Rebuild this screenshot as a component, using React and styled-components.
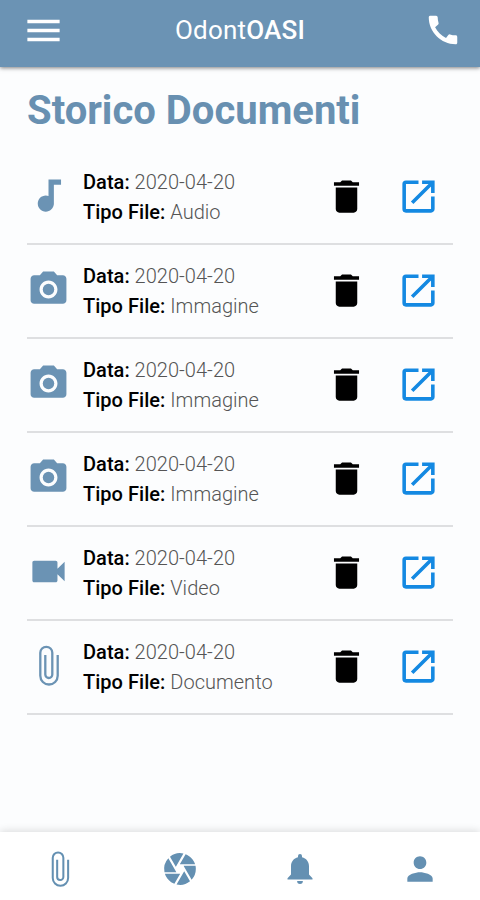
import React from "react";
import styled, { createGlobalStyle } from "styled-components";
import {
  MdAudiotrack,
  MdCall,
  MdCamera,
  MdCameraAlt,
  MdDelete,
  MdLaunch,
  MdMenu,
  MdPerson,
  MdVideocam,
} from "react-icons/md";

const GlobalStyle = createGlobalStyle`
  * {
    box-sizing: border-box;
  }

  body {
    margin: 0;
    font-family: Roboto, sans-serif;
    background-color: #fcfdfe;
  }

  svg {
    display: block;
  }
`;

const Page = styled.div`
  height: 900px;
  display: flex;
  flex-direction: column;
`;

const Header = styled.header`
  height: 67px;
  padding: 0 18px 7px 22px;
  display: grid;
  grid-template-columns: 43px 1fr 47px;
  align-items: center;
  background-color: #6b93b4;
  color: white;
  box-shadow: 0 1px 4px rgba(0, 0, 0, 0.5);
`;

const Brand = styled.div`
  font-size: 26px;
  line-height: 30px;
  letter-spacing: 0.2px;
  text-align: center;

  b {
    font-weight: 500;
  }
`;

const IconButton = styled.button`
  display: flex;
  justify-self: ${(props) => props.$align || "start"};
  padding: 0;
  border: none;
  background: none;
  color: ${(props) => props.$color || "inherit"};
  font-size: ${(props) => props.$size}px;
  cursor: pointer;
`;

const Content = styled.main`
  flex: 1;
  padding: 21px 27px 0;
`;

const Title = styled.h1`
  margin: 0 0 17px;
  font-size: 40px;
  line-height: 46px;
  font-weight: 700;
  color: #6890b1;
`;

const Row = styled.div`
  height: 94px;
  display: flex;
  align-items: center;
  border-bottom: 2px solid #dedfe1;
`;

const FileIcon = styled.div`
  width: 56px;
  padding-bottom: 3px;
  color: #6b93b4;
  font-size: 43px;
`;

const Info = styled.div`
  flex: 1;
  font-size: 20px;
  line-height: 30px;
  font-weight: 300;
  letter-spacing: 0.03px;
  color: #555;

  b {
    font-weight: 500;
    color: #000;
  }
`;

const Actions = styled.div`
  display: flex;
  gap: 29px;
  margin-right: 13px;
  padding-bottom: 1px;
`;

const TabBar = styled.nav`
  height: 68px;
  display: flex;
  align-items: center;
  padding-top: 6px;
  background-color: white;
  box-shadow: 0 -1px 8px rgba(0, 0, 0, 0.14);
`;

const Tab = styled.div`
  flex: 1;
  display: flex;
  justify-content: center;
  color: #6490b2;
  font-size: 38px;
`;

function PaperclipIcon() {
  return (
    <svg width="1em" height="1em" viewBox="-12 -1.5 43 43" fill="none" stroke="currentColor" strokeWidth="2.3">
      <path d="M18.7 9.5V30.3A8.7 8.7 0 0 1 1.3 30.3V7.3A6 6 0 0 1 13.3 7.3V29A3.5 3.5 0 0 1 6.3 29V9.5" />
    </svg>
  );
}

function BellIcon() {
  return (
    <svg width="1em" height="1em" viewBox="-6.5 -4 38 38" fill="currentColor">
      <path d="M12.5 0a2 2 0 0 1 2 2v1.3c4.3 1 7 4.5 7 9V20.5l3.5 3.7v1.2H0v-1.2l3.5-3.7V12.3c0-4.5 2.7-8 7-9V2a2 2 0 0 1 2-2z" />
      <path d="M9.6 27h5.8a2.9 2.9 0 0 1-5.8 0z" />
    </svg>
  );
}

const icons = {
  Audio: MdAudiotrack,
  Immagine: MdCameraAlt,
  Video: MdVideocam,
  Documento: PaperclipIcon,
};

const documents = [
  { id: 1, date: "2020-04-20", type: "Audio" },
  { id: 2, date: "2020-04-20", type: "Immagine" },
  { id: 3, date: "2020-04-20", type: "Immagine" },
  { id: 4, date: "2020-04-20", type: "Immagine" },
  { id: 5, date: "2020-04-20", type: "Video" },
  { id: 6, date: "2020-04-20", type: "Documento" },
];

const tabs = [PaperclipIcon, MdCamera, BellIcon, MdPerson];

function DocumentRow({ date, type }) {
  const Icon = icons[type];

  return (
    <Row>
      <FileIcon>
        <Icon />
      </FileIcon>
      <Info>
        <div>
          <b>Data:</b> {date}
        </div>
        <div>
          <b>Tipo File:</b> {type}
        </div>
      </Info>
      <Actions>
        <IconButton $size={43} $color="#000">
          <MdDelete />
        </IconButton>
        <IconButton $size={43} $color="#1489e2">
          <MdLaunch />
        </IconButton>
      </Actions>
    </Row>
  );
}

function App() {
  return (
    <>
      <GlobalStyle />
      <Page>
        <Header>
          <IconButton $size={43}>
            <MdMenu />
          </IconButton>
          <Brand>
            Odont<b>OASI</b>
          </Brand>
          <IconButton $size={38} $align="end">
            <MdCall />
          </IconButton>
        </Header>
        <Content>
          <Title>Storico Documenti</Title>
          {documents.map((doc) => (
            <DocumentRow key={doc.id} date={doc.date} type={doc.type} />
          ))}
        </Content>
        <TabBar>
          {tabs.map((Icon, index) => (
            <Tab key={index}>
              <Icon />
            </Tab>
          ))}
        </TabBar>
      </Page>
    </>
  );
}

export default App;
